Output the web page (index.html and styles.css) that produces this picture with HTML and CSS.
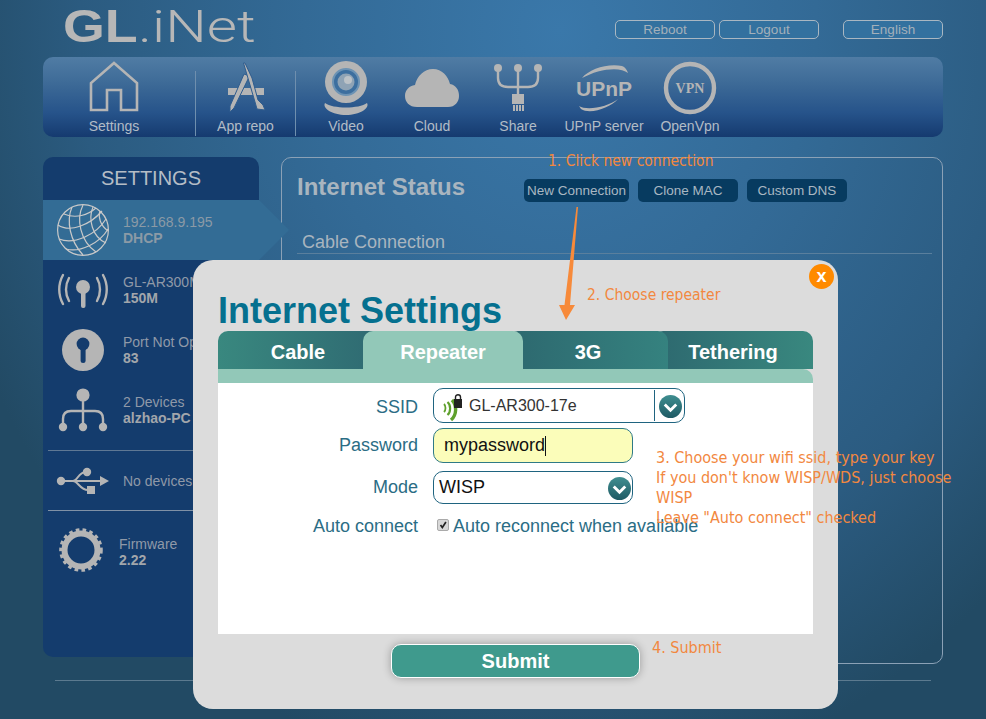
FILE: index.html
```html
<!DOCTYPE html>
<html lang="en">
<head>
<meta charset="utf-8">
<title>GL.iNet Internet Settings</title>
<link rel="stylesheet" href="styles.css">
</head>
<body>
<div class="page">
  <header class="top">
    <div class="logo"><span class="logo-bold">GL</span><span class="logo-light">.iNet</span></div>
    <div class="top-actions">
      <button class="top-btn">Reboot</button>
      <button class="top-btn">Logout</button>
      <button class="top-btn lang">English</button>
    </div>
  </header>

  <nav class="nav">
    <a class="nav-item first">
      <svg class="nav-icon" viewBox="0 0 60 52"><path d="M7 49V22L30 2 53 22V49H37V29H23V49Z" fill="none" stroke="#b5b5b5" stroke-width="2.6"/></svg>
      <span>Settings</span>
    </a>
    <span class="nav-div"></span>
    <a class="nav-item apps">
      <svg class="nav-icon" viewBox="0 0 60 52"><path d="M12 27H48V34H12Z" fill="#b5b5b5"/><g fill="#b5b5b5" stroke="#2f5c8e" stroke-width="1"><path d="M28 13 33.5 15 18 47 14 51 14 45Z"/><path d="M27.5 2 29 2 36 17 42 39 47 44 49 49 41 48 39 41Z"/></g></svg>
      <span>App repo</span>
    </a>
    <span class="nav-div after"></span>
    <a class="nav-item">
      <svg class="nav-icon" viewBox="0 0 60 52"><circle cx="30" cy="21" r="21" fill="#b5b5b5"/><circle cx="30" cy="21" r="13" fill="#3d6f9f" stroke="#6d93b4" stroke-width="2"/><circle cx="30" cy="21" r="8.5" fill="#8fa3b5"/><circle cx="32" cy="19" r="4" fill="#bcc2c7"/><path d="M9 42C17 48 43 48 51 42 54 47 44 54 30 54 16 54 6 47 9 42Z" fill="#b5b5b5"/></svg>
      <span>Video</span>
    </a>
    <a class="nav-item">
      <svg class="nav-icon" viewBox="0 0 60 52"><path d="M15 46C7 46 3 41 3 35 3 29 7 25 13 24 15 15 22 8 31 8 40 8 46 15 48 23 54 24 57 29 57 35 57 41 53 46 46 46Z" fill="#b5b5b5"/></svg>
      <span>Cloud</span>
    </a>
    <a class="nav-item">
      <svg class="nav-icon" viewBox="0 0 60 52"><g fill="none" stroke="#b5b5b5" stroke-width="2.4"><path d="M30 8V34"/><path d="M10 9V17C10 24 14 26 20 26H40C46 26 50 24 50 17V9"/></g><g fill="#b5b5b5"><circle cx="30" cy="7" r="4"/><circle cx="10" cy="7" r="4"/><circle cx="50" cy="7" r="4"/><rect x="24" y="33" width="12" height="10"/><rect x="25" y="44" width="2" height="6"/><rect x="28" y="44" width="2" height="6"/><rect x="31" y="44" width="2" height="6"/><rect x="34" y="44" width="2" height="6"/></g></svg>
      <span>Share</span>
    </a>
    <a class="nav-item">
      <svg class="nav-icon" viewBox="0 0 60 52"><text x="30" y="35" class="upnp-text" text-anchor="middle">UPnP</text><path d="M8 17C15 8 34 2 48 5 51 6 53 9 54 12 46 5 24 8 8 17ZM5 45C13 50 34 46 44 38 36 47 16 54 7 48Z" fill="#b5b5b5"/></svg>
      <span>UPnP server</span>
    </a>
    <a class="nav-item">
      <svg class="nav-icon" viewBox="0 0 60 52"><circle cx="30" cy="27" r="24" fill="none" stroke="#b5b5b5" stroke-width="4.4"/><text x="30" y="32" class="vpn-text" text-anchor="middle">VPN</text></svg>
      <span>OpenVpn</span>
    </a>
  </nav>

  <main class="main">
    <aside class="side">
      <h2 class="side-title">SETTINGS</h2>
      <div class="side-row active">
        <svg class="side-icon" viewBox="0 0 54 54"><g fill="none" stroke="#c9c9c9" stroke-width="1.2"><circle cx="27" cy="27" r="25.4"/><path d="M2 22C14 30 34 22 46 8"/><path d="M3 36C18 42 40 32 50 16"/><path d="M10 46C24 50 44 40 52 26"/><path d="M8 11C20 16 32 12 40 5"/><path d="M16 4C10 18 14 38 27 52"/><path d="M27 2C20 16 24 38 40 49"/><path d="M37 4C32 16 36 34 50 40"/><path d="M44 8C42 14 44 22 52 28"/></g></svg>
        <div class="side-text"><span>192.168.9.195</span><b>DHCP</b></div>
      </div>
      <div class="side-row">
        <svg class="side-icon" viewBox="0 0 54 54"><g fill="none" stroke="#b5b5b5" stroke-width="2.4" stroke-linecap="round"><path d="M7 12C2 21 2 32 7 41"/><path d="M13 15C9 22 9 31 13 38"/><path d="M47 12C52 21 52 32 47 41"/><path d="M41 15C45 22 45 31 41 38"/></g><circle cx="27" cy="24" r="7" fill="#b5b5b5"/><rect x="25" y="26" width="4.5" height="19" rx="2" fill="#b5b5b5"/></svg>
        <div class="side-text"><span>GL-AR300M</span><b>150M</b></div>
      </div>
      <div class="side-row">
        <svg class="side-icon" viewBox="0 0 54 54"><circle cx="27" cy="27" r="21" fill="#b5b5b5"/><circle cx="27" cy="21" r="6.4" fill="#143c6d"/><rect x="24.6" y="22" width="5" height="18" rx="2.5" fill="#143c6d"/></svg>
        <div class="side-text"><span>Port Not Open</span><b>83</b></div>
      </div>
      <div class="side-row">
        <svg class="side-icon" viewBox="0 0 54 54"><g fill="none" stroke="#b5b5b5" stroke-width="2.4"><path d="M27 12V44"/><path d="M7 44V36C7 30 10 28 15 28H39C44 28 47 30 47 36V44"/></g><g fill="#b5b5b5"><circle cx="27" cy="12" r="6.6"/><circle cx="7" cy="44" r="4.2"/><circle cx="27" cy="44" r="4.2"/><circle cx="47" cy="44" r="4.2"/></g></svg>
        <div class="side-text"><span>2 Devices</span><b>alzhao-PC</b></div>
      </div>
      <div class="side-row usb">
        <svg class="side-icon" viewBox="0 0 54 54"><g fill="none" stroke="#b5b5b5" stroke-width="2"><path d="M6 27H48"/><path d="M17 27C22 27 22 18 30 18"/><path d="M17 27C22 27 24 36 32 36"/></g><g fill="#b5b5b5"><circle cx="5" cy="27" r="4.2"/><circle cx="31" cy="18" r="4.2"/><rect x="31" y="32" width="8" height="8"/><path d="M44 22 53 27 44 32Z"/></g></svg>
        <div class="side-text"><span>No devices</span></div>
      </div>
      <div class="side-row firmware">
        <svg class="firmware-icon" viewBox="0 0 44 44"><circle cx="22" cy="22" r="16.5" fill="none" stroke="#b5b5b5" stroke-width="6"/><circle cx="22" cy="22" r="20" fill="none" stroke="#b5b5b5" stroke-width="3.6" stroke-dasharray="3.6 3.2"/></svg>
        <div class="side-text"><span>Firmware</span><b>2.22</b></div>
      </div>
    </aside>

    <section class="panel">
      <div class="panel-head">
        <h2 class="panel-title">Internet Status</h2>
        <button class="dark-btn">New Connection</button>
        <button class="dark-btn">Clone MAC</button>
        <button class="dark-btn">Custom DNS</button>
      </div>
      <h3 class="cable-title">Cable Connection</h3>
    </section>
  </main>
  <div class="foot-rule"></div>
</div>

<div class="modal">
  <button class="close">x</button>
  <h1 class="modal-title">Internet Settings</h1>
  <div class="tabs">
    <div class="tab t-cable">Cable</div>
    <div class="tab t-on">Repeater</div>
    <div class="tab t-3g">3G</div>
    <div class="tab t-teth">Tethering</div>
  </div>
  <div class="strip"></div>
  <form class="form">
    <label class="lab lab-ssid">SSID</label>
    <div class="field ssid">
      <svg class="wifi" viewBox="0 0 22 24"><g fill="none" stroke="#5fa02c"><path d="M3 10C5 12 5 16 3 18" stroke-width="1.8"/><path d="M6.5 8C10 11 10 18 6.5 21" stroke-width="2.2"/><path d="M11 6C16 11 16 21 10 26" stroke-width="3.4"/></g><rect x="13" y="5" width="8" height="9" fill="#222"/><path d="M14.5 5V3C14.5 0 19.5 0 19.5 3V5" fill="none" stroke="#222" stroke-width="1.4"/></svg>
      <span class="ssid-name">GL-AR300-17e</span>
      <span class="sep"></span>
      <span class="chev"><svg viewBox="0 0 24 24"><path d="M6 10 12 16 18 10" fill="none" stroke="#fff" stroke-width="3"/></svg></span>
    </div>
    <label class="lab">Password</label>
    <div class="field pass"><span>mypassword</span><i class="caret"></i></div>
    <label class="lab lab-mode">Mode</label>
    <div class="field mode"><span>WISP</span>
      <span class="chev"><svg viewBox="0 0 24 24"><path d="M6 10 12 16 18 10" fill="none" stroke="#fff" stroke-width="3"/></svg></span>
    </div>
    <label class="lab auto">Auto connect</label>
    <div class="check-row"><span class="check"><svg viewBox="0 0 12 12"><path d="M3 6 5.2 9 9.5 2.5" fill="none" stroke="#222" stroke-width="2"/></svg></span>Auto reconnect when available</div>
  </form>
  <div class="submit-wrap"><button class="submit">Submit</button></div>
</div>

<svg class="arrow" viewBox="0 0 30 120"><path d="M18.5 0H20L12 98H17L8 113 1 98H6.5Z" fill="#f78a3a"/></svg>
<div class="note n1">1. Click new connection</div>
<div class="note n2">2. Choose repeater</div>
<div class="note n3">3. Choose your wifi ssid, type your key<br>If you don't know WISP/WDS, just choose<br>WISP<br>Leave "Auto connect" checked</div>
<div class="note n4">4. Submit</div>
</body>
</html>
```
FILE: styles.css
```css
* { box-sizing: border-box; }
html, body { margin: 0; height: 719px; overflow: hidden; }
body {
  position: relative;
  font-family: "Liberation Sans", Arial, sans-serif;
  background: radial-gradient(ellipse 640px 760px at 560px 30px, #3a78aa 0%, #336a96 40%, #2b5b80 75%, #224a64 100%);
}
button { font-family: inherit; padding: 0; cursor: pointer; }
.page { padding: 0 43px; }

.top { height: 57px; display: flex; justify-content: space-between; }
.logo { margin-left: 20px; height: 52px; line-height: 52px; color: #b7b7b7; font-size: 46px; white-space: nowrap; }
.logo-bold { display: inline-block; font-weight: bold; margin-right: 11px; transform: scaleX(1.17); transform-origin: left center; }
.logo-light { display: inline-block; font-family: Roboto, sans-serif; font-size: 45px; font-weight: 300; transform: scaleX(1.3); transform-origin: left center; }
.top-actions { display: flex; align-items: flex-start; padding-top: 20px; gap: 4px; }
.top-btn { width: 100px; height: 19px; border: 1px solid #a9b7c2; border-radius: 5px; background: #33719f; color: #a3b0ba; font-size: 13.5px; line-height: 16px; }
.top-btn.lang { margin-left: 20px; }

.nav { display: flex; height: 80px; padding-left: 21px; border-radius: 10px; background: linear-gradient(#507ca4 0%, #3f6c98 30%, #26538a 70%, #153a6f 100%); }
.nav-item { width: 86px; height: 80px; padding-top: 4px; display: flex; flex-direction: column; align-items: center; color: #b2bcc6; font-size: 14px; line-height: 18px; }
.nav-item.first { width: 100px; margin-right: 31px; }
.nav-item.apps { width: 99px; }
.nav-div { width: 1px; height: 65px; margin-top: 14px; background: #6f8fae; flex: none; }
.nav-div.after { margin-right: 7px; }
.nav-icon { width: 60px; height: 52px; margin-bottom: 4px; flex: none; overflow: visible; }
.upnp-text { font: bold 21px "Liberation Sans", sans-serif; fill: #b5b5b5; }
.vpn-text { font: bold 14px "Liberation Serif", serif; fill: #b5b5b5; }

.main { display: flex; gap: 22px; margin-top: 20px; align-items: flex-start; }
.side { width: 216px; height: 500px; border-radius: 10px; background: #143c6d; position: relative; }
.side-title { margin: 0; height: 43px; line-height: 42px; text-align: center; font-size: 20px; font-weight: normal; color: #b5bdc6; }
.side-row { height: 60px; padding-left: 13px; display: flex; align-items: center; gap: 13px; }
.side-row.active { position: relative; background: #336c95; }
.side-row.active::after { content: ""; position: absolute; left: 216px; top: 0; border-style: solid; border-width: 30px 0 30px 30px; border-color: transparent transparent transparent #336c95; }
.side-icon { width: 54px; height: 54px; flex: none; }
.side-text { display: flex; flex-direction: column; font-size: 14px; line-height: 16px; color: #8f99a8; white-space: nowrap; }
.side-text b { color: #a2a6ab; }
.active .side-text, .active .side-text b { color: #8b9aa6; }
.usb { margin-top: 10px; height: 61px; border-top: 1px solid #5f7894; border-bottom: 1px solid #8091a6; margin-left: 5px; padding-left: 8px; }
.firmware { padding-left: 16px; gap: 16px; height: 64px; margin-top: 9px; }
.firmware-icon { width: 44px; height: 44px; flex: none; margin-top: -5px; }

.panel { flex: 1; height: 507px; border: 1px solid #8ba1b6; border-radius: 10px; padding: 0 10px 0 15px; }
.panel-head { display: flex; align-items: center; height: 58px; padding-top: 7px; gap: 9px; }
.panel-title { margin: 0 40px 7px 0; font-size: 24px; line-height: 44px; width: 178px; color: #a9b5bf; white-space: nowrap; }
.dark-btn { width: 100px; height: 23px; border: 0; border-radius: 5px; background: #073b60; color: #a9b7c2; font-size: 13.5px; line-height: 22px; white-space: nowrap; }
.dark-btn:first-of-type { width: 105px; }
.cable-title { margin: 15px 0 0 0; padding: 0 0 2px 5px; height: 23px; font-size: 18px; line-height: 22px; font-weight: normal; color: #a9b5bf; border-bottom: 1px solid #5a7f9d; }
.foot-rule { margin: 16px 12px 0; height: 1px; background: #5c7a8f; }

.modal { position: absolute; left: 193px; top: 260px; width: 645px; height: 449px; border-radius: 20px; background: #dcdcdc; padding: 0 25px; }
.close { position: absolute; right: 4px; top: 4px; width: 25px; height: 25px; border: 0; border-radius: 50%; background: #ff8a00; color: #fff; font-size: 18px; font-weight: bold; line-height: 21px; }
.modal-title { margin: 0; height: 71px; padding-top: 30px; font-size: 36px; line-height: 41px; font-weight: bold; color: #05708f; white-space: nowrap; }
.tabs { display: flex; height: 38px; }
.tab { position: relative; width: 160px; margin-right: -15px; height: 38px; border-radius: 10px 10px 0 0; color: #fff; font-size: 20px; font-weight: bold; line-height: 42px; text-align: center; }
.t-cable { background: linear-gradient(90deg, #39887f, #2f6a72); border-top-right-radius: 0; }
.t-on { background: #92c8b8; z-index: 3; }
.t-3g { background: linear-gradient(90deg, #2d686f, #35827f); z-index: 2; }
.t-teth { background: linear-gradient(90deg, #2d686f, #39887f); margin-right: 0; z-index: 1; }
.strip { height: 14px; background: #92c8b8; border-top-right-radius: 10px; }
.form { height: 251px; background: #fff; display: grid; grid-template-columns: 200px 1fr; column-gap: 15px; grid-template-rows: 35px 35px 36px 32px; row-gap: 5px; padding-top: 5px; align-content: start; color: #2b6d85; font-size: 18px; }
.lab { text-align: right; line-height: 35px; }
.lab-ssid { line-height: 39px; }
.lab-mode { line-height: 38px; }
.lab.auto { margin-top: 2px; line-height: 30px; }
.field { position: relative; display: flex; align-items: center; width: 200px; border: 1px solid #1f6480; border-radius: 10px; background: #fff; color: #111; white-space: nowrap; }
.field.ssid { width: 252px; color: #333; font-size: 16px; padding-left: 7px; }
.wifi { width: 22px; height: 24px; flex: none; margin-right: 6px; overflow: visible; }
.sep { position: absolute; left: 220px; top: 1px; bottom: 1px; width: 1px; background: #1f6480; }
.chev { position: absolute; right: 1px; top: 50%; margin-top: -11px; width: 23px; height: 23px; border-radius: 50%; background: linear-gradient(#3f8e90, #1f5a64); display: block; }
.ssid .chev { right: 2px; }
.chev svg { display: block; width: 23px; height: 23px; }
.pass { background: #fbfdba; padding-left: 10px; border-color: #2f7a86; }
.caret { display: block; width: 1px; height: 20px; background: #111; }
.mode { padding-left: 5px; margin-top: 3px; }
.check-row { display: flex; align-items: center; margin-top: 2px; margin-left: 4px; height: 30px; white-space: nowrap; }
.check { width: 12px; height: 12px; margin-right: 4px; border-radius: 2px; background: #d8d8d8; border: 1px solid #aaa; display: block; margin-top: -2px; }
.check svg { display: block; width: 10px; height: 10px; }
.submit-wrap { display: flex; justify-content: center; padding: 10px 0 0 1px; }
.submit { width: 249px; height: 34px; margin-left: -1px; border: 1px solid #fff; border-radius: 10px; background: #3f9a8d; color: #fff; font-size: 20px; font-weight: bold; box-shadow: 0 0 8px rgba(0,0,0,.3); }

.arrow { position: absolute; left: 558px; top: 207px; width: 30px; height: 120px; }
.note { position: absolute; font-family: "DejaVu Sans", sans-serif; font-stretch: condensed; font-size: 16px; line-height: 20px; color: #f2883f; white-space: nowrap; }
.n1 { left: 548px; top: 151px; font-size: 15.5px; }
.n2 { left: 587px; top: 285px; font-size: 15.5px; }
.n3 { left: 656px; top: 448px; }
.n4 { left: 652px; top: 638px; }
```
